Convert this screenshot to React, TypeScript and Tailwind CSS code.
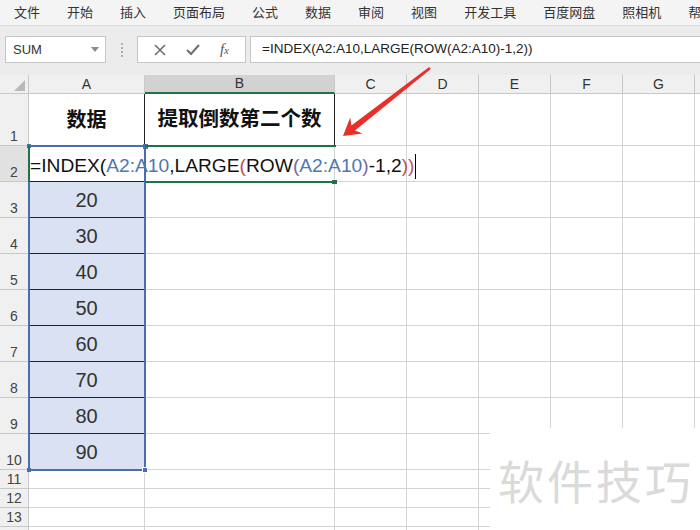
import { FC, ReactNode } from "react";

const menus = ["文件", "开始", "插入", "页面布局", "公式", "数据", "审阅", "视图", "开发工具", "百度网盘", "照相机", "帮助"];
const colNames = ["A", "B", "C", "D", "E", "F", "G", ""];
const colW = ["w-[116px]", "w-[190px]", "w-[72px]", "w-[72px]", "w-[72px]", "w-[72px]", "w-[72px]", "w-[72px]"];
const values = [20, 30, 40, 50, 60, 70, 80, 90];

const font = { fontFamily: '"Liberation Sans", "Noto Sans CJK SC", sans-serif' };

type CellProps = { w: string; className?: string; children?: ReactNode };

const Cell: FC<CellProps> = ({ w, className = "", children }) => (
  <div className={`${w} shrink-0 border-r border-b border-[#d4d4d4] flex items-center justify-center ${className}`}>
    {children}
  </div>
);

const RowHead: FC<{ label: string; className?: string }> = ({ label, className = "" }) => (
  <div className={`w-[29px] shrink-0 border-r border-b border-[#c8c8c8] flex items-end justify-center text-[14px] leading-[17px] text-[#444] ${className}`}>
    {label}
  </div>
);

const EmptyCells: FC<{ from: number }> = ({ from }) => (
  <>
    {colW.slice(from).map((w, i) => (
      <Cell key={i} w={w} />
    ))}
  </>
);

const App: FC = () => {
  return (
    <div className="relative w-[700px] h-[530px] overflow-hidden bg-white" style={font}>
      {/* ribbon tabs */}
      <div className="h-[26px] bg-[#f4f4f4] border-b border-[#dadada] shadow-[0_1px_3px_rgba(0,0,0,0.08)] flex items-center pl-[14px] gap-[27px] text-[13px] text-[#333] whitespace-nowrap">
        {menus.map((m) => (
          <span key={m}>{m}</span>
        ))}
      </div>

      {/* formula bar */}
      <div className="h-[49px] bg-[#ececec] flex items-start pt-[10px]">
        <div className="ml-[5px] w-[101px] h-[27px] bg-white border border-[#c6c6c6] flex items-center justify-between pl-[7px] pr-[6px] text-[13px] text-[#333]">
          <span>SUM</span>
          <svg width="8" height="5" viewBox="0 0 8 5">
            <path d="M0 0 L8 0 L4 5 Z" fill="#8a8a8a" />
          </svg>
        </div>
        <div className="w-[31px] h-[27px] flex flex-col items-center justify-center gap-[2px]">
          <span className="w-[2px] h-[2px] bg-[#b0b0b0]" />
          <span className="w-[2px] h-[2px] bg-[#b0b0b0]" />
          <span className="w-[2px] h-[2px] bg-[#b0b0b0]" />
          <span className="w-[2px] h-[2px] bg-[#b0b0b0]" />
        </div>
        <div className="w-[109px] h-[27px] bg-white border border-[#c6c6c6] flex items-center justify-around px-[6px]">
          <svg width="12" height="12" viewBox="0 0 12 12">
            <path d="M1 1 L11 11 M11 1 L1 11" stroke="#6e6e6e" strokeWidth="1.6" />
          </svg>
          <svg width="14" height="12" viewBox="0 0 14 12">
            <path d="M1 6 L5 10 L13 1" stroke="#6e6e6e" strokeWidth="2" fill="none" />
          </svg>
          <span className="italic text-[15px] text-[#555]" style={{ fontFamily: '"Liberation Serif", serif' }}>
            f<span className="text-[11px]">x</span>
          </span>
        </div>
        <div className="ml-[4px] flex-1 h-[27px] bg-white border border-[#c6c6c6] border-r-0 flex items-center pl-[11px] text-[13.5px] text-[#222]">
          =INDEX(A2:A10,LARGE(ROW(A2:A10)-1,2))
        </div>
      </div>

      {/* sheet */}
      <div className="flex flex-col">
        <div className="flex h-[19px]">
          <div className="w-[29px] shrink-0 bg-[#f0f0f0] border-r border-b border-[#c8c8c8] flex items-end justify-end pr-[3px] pb-[2px]">
            <svg width="11" height="11" viewBox="0 0 11 11">
              <path d="M11 0 L11 11 L0 11 Z" fill="#b9b9b9" />
            </svg>
          </div>
          {colNames.map((c, i) => (
            <div
              key={i}
              className={`${colW[i]} shrink-0 border-r border-[#c8c8c8] flex items-center justify-center text-[14px] text-[#333] ${
                i === 1 ? "bg-[#d2d2d2] border-b-2 border-b-[#217346]" : "bg-[#f0f0f0] border-b border-b-[#c8c8c8]"
              }`}
            >
              {c}
            </div>
          ))}
        </div>

        <div className="flex h-[52px]">
          <RowHead label="1" className="bg-[#f0f0f0]" />
          <Cell w={colW[0]} className="border-r-[#222] text-[20px] font-bold text-[#111]">
            数据
          </Cell>
          <Cell w={colW[1]} className="border-r-[#222] text-[20.5px] font-bold text-[#111]">
            提取倒数第二个数
          </Cell>
          <EmptyCells from={2} />
        </div>

        <div className="flex h-[36px]">
          <RowHead label="2" className="bg-[#e1e1e1]" />
          <div className={`${colW[0]} shrink-0 border-b border-[#222] bg-white`} />
          <div className={`${colW[1]} shrink-0 border-r border-b border-[#d4d4d4] bg-white`} />
          <EmptyCells from={2} />
        </div>

        {values.map((v, i) => (
          <div key={v} className="flex h-[36px]">
            <RowHead label={String(i + 3)} className="bg-[#f0f0f0]" />
            <Cell w={colW[0]} className={`bg-[#d9e1f2] text-[20px] text-[#333] ${i < 7 ? "border-b-[#222]" : ""}`}>
              {v}
            </Cell>
            <EmptyCells from={1} />
          </div>
        ))}

        {["11", "12", "13", ""].map((r, i) => (
          <div key={i} className="flex h-[19px]">
            <RowHead label={r} className="bg-[#f0f0f0]" />
            <EmptyCells from={0} />
          </div>
        ))}
      </div>

      {/* range reference A2:A10 */}
      <div className="absolute left-[28px] top-[145px] w-[118px] h-[326px] border-2 border-[#4a6ea9]" />
      <div className="absolute left-[27px] top-[144px] w-[4px] h-[4px] bg-[#4a6ea9]" />
      <div className="absolute left-[143px] top-[144px] w-[5px] h-[5px] bg-[#4a6ea9]" />
      <div className="absolute left-[27px] top-[468px] w-[4px] h-[4px] bg-[#4a6ea9]" />
      <div className="absolute left-[142px] top-[467px] w-[6px] h-[6px] bg-[#4a6ea9] border border-white" />

      {/* active cell editor */}
      <div className="absolute left-[145px] top-[145px] w-[191px] h-[2px] bg-[#217346]" />
      <div className="absolute left-[145px] top-[181px] w-[191px] h-[2px] bg-[#217346]" />
      <div className="absolute left-[28px] top-[146px] w-[2px] h-[36px] bg-[#217346]" />
      <div className="absolute left-[332px] top-[180px] w-[5px] h-[4px] bg-[#217346]" />

      <div className="absolute left-[30px] top-[147px] h-[35px] flex items-center pt-[3px] text-[19.2px] text-[#111] whitespace-nowrap">
        <span>=INDEX(</span>
        <span className="text-[#4e77b5]">A2:A10</span>
        <span>,LARGE</span>
        <span className="text-[#c0504d]">(</span>
        <span>ROW</span>
        <span className="text-[#8064a2]">(</span>
        <span className="text-[#4e77b5]">A2:A10</span>
        <span className="text-[#8064a2]">)</span>
        <span>-1,2</span>
        <span className="text-[#c0504d]">)</span>
        <span className="text-[#b05a7a]">)</span>
        <span className="ml-[1px] w-[1px] h-[25px] bg-black" />
      </div>

      {/* red arrow */}
      <svg className="absolute left-0 top-0 pointer-events-none" width="700" height="530" viewBox="0 0 700 530">
        <polygon
          points="430.8,69 355,130.4 362.6,133.4 343,136 350.2,117.6 351.4,125.6 429.2,67"
          fill="#e8302a"
        />
      </svg>

      {/* watermark */}
      <div className="absolute left-[490px] top-[428px] right-0 bottom-0 bg-white flex items-center justify-end pr-[6px]">
        <span className="text-[46px] tracking-[3px] text-[#dadada]" style={{ fontFamily: '"Noto Sans CJK SC", sans-serif' }}>
          软件技巧
        </span>
      </div>
    </div>
  );
};

export default App;
